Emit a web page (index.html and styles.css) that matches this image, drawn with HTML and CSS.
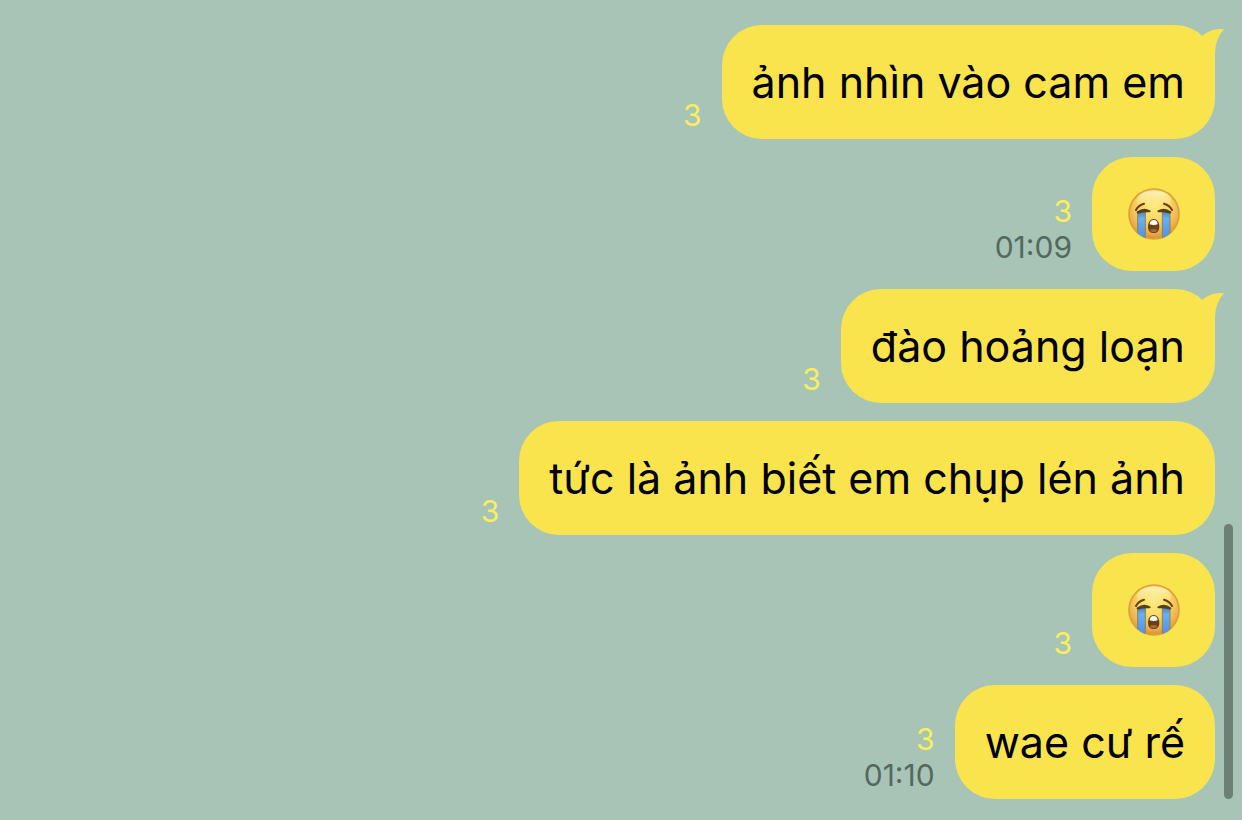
FILE: index.html
```html
<!DOCTYPE html>
<html lang="vi">
<head>
<meta charset="utf-8">
<meta name="viewport" content="width=device-width, initial-scale=1">
<title>Chat</title>
<link rel="stylesheet" href="styles.css">
</head>
<body>
<svg class="defs" aria-hidden="true">
  <defs>
    <radialGradient id="face" cx="0.5" cy="0.34" r="0.68">
      <stop offset="0" stop-color="#fdea7c"/>
      <stop offset="0.45" stop-color="#f9d863"/>
      <stop offset="0.78" stop-color="#eeb04a"/>
      <stop offset="1" stop-color="#d68a30"/>
    </radialGradient>
    <linearGradient id="shine" x1="0" y1="0" x2="0" y2="1">
      <stop offset="0" stop-color="#fffbe0" stop-opacity="0.7"/>
      <stop offset="1" stop-color="#fff3a0" stop-opacity="0"/>
    </linearGradient>
    <linearGradient id="tear" x1="0" y1="0" x2="0" y2="1">
      <stop offset="0" stop-color="#4682c4"/>
      <stop offset="0.25" stop-color="#68b0f6"/>
      <stop offset="1" stop-color="#4a8fe6"/>
    </linearGradient>
    <clipPath id="disc"><circle cx="130" cy="132" r="76"/></clipPath>
    <symbol id="crying" viewBox="52 54 156 156">
      <circle cx="130" cy="132" r="75" fill="url(#face)" stroke="#dfa03c" stroke-width="5"/>
      <ellipse cx="130" cy="90" rx="52" ry="28" fill="url(#shine)"/>
      <g clip-path="url(#disc)">
        <rect x="81" y="124" width="23" height="86" fill="url(#tear)"/>
        <rect x="155" y="124" width="23" height="86" fill="url(#tear)"/>
        <path d="M81 124v84M104 124v84M155 124v84M178 124v84" fill="none" stroke="#8f8350" stroke-width="3"/>
      </g>
      <path d="M76 120Q83 106 100 101M184 120Q177 106 160 101" fill="none" stroke="#694014" stroke-width="6" stroke-linecap="round"/>
      <path d="M81 127Q99 113 117 124Q99 123 83 128ZM179 127Q161 113 143 124Q161 123 177 128Z" fill="#54401b" stroke="#54401b" stroke-width="6" stroke-linejoin="round"/>
      <path d="M129 147C119 147 112 157 112 170C112 183 119 189 129 189C139 189 146 183 146 170C146 157 139 147 129 147Z" fill="#69401a"/>
      <path d="M117 163Q118 150 129 150Q140 150 141 163Q129 168 117 163Z" fill="#fffdf4"/>
      <path d="M117 181Q129 173 141 181Q137 187 129 187Q121 187 117 181Z" fill="#a66b34"/>
    </symbol>
    <symbol id="tail" viewBox="140 57 81 108">
      <path d="M140 88L158 76Q184 55 221 57Q194 89 194 132V165H140Z" fill="#f9e44d"/>
    </symbol>
  </defs>
</svg>
<main class="chat">
  <div class="message">
    <div class="meta"><span class="unread">3</span></div>
    <div class="bubble">ảnh nhìn vào cam em<svg class="tail" aria-hidden="true"><use href="#tail"/></svg></div>
  </div>
  <div class="message">
    <div class="meta"><span class="unread">3</span><time class="time">01:09</time></div>
    <div class="bubble"><svg class="emoji" role="img" aria-label="Loudly crying face"><use href="#crying"/></svg></div>
  </div>
  <div class="message">
    <div class="meta"><span class="unread">3</span></div>
    <div class="bubble">đào hoảng loạn<svg class="tail" aria-hidden="true"><use href="#tail"/></svg></div>
  </div>
  <div class="message">
    <div class="meta"><span class="unread">3</span></div>
    <div class="bubble">tức là ảnh biết em chụp lén ảnh</div>
  </div>
  <div class="message">
    <div class="meta"><span class="unread">3</span></div>
    <div class="bubble"><svg class="emoji" role="img" aria-label="Loudly crying face"><use href="#crying"/></svg></div>
  </div>
  <div class="message">
    <div class="meta"><span class="unread">3</span><time class="time">01:10</time></div>
    <div class="bubble">wae cư rế</div>
  </div>
</main>
<div class="scroll-thumb" aria-hidden="true"></div>
</body>
</html>
```
FILE: styles.css
```css
* {
  box-sizing: border-box;
}

body {
  margin: 0;
  background: #a7c4b7;
  font-family: Inter, "Noto Sans", sans-serif;
}

.defs {
  position: absolute;
  width: 0;
  height: 0;
}

.chat {
  display: flex;
  flex-direction: column;
  gap: 18px;
  padding: 25px 27px 21px;
}

.message {
  display: flex;
  justify-content: flex-end;
  align-items: flex-end;
  gap: 20px;
}

.meta {
  display: flex;
  flex-direction: column;
  align-items: flex-end;
  padding-bottom: 6px;
  font-size: 30px;
  line-height: 36px;
}

.unread {
  color: #f9ee5d;
}

.time {
  color: #53695f;
}

.bubble {
  position: relative;
  display: flex;
  justify-content: center;
  align-items: center;
  min-width: 123px;
  min-height: 114px;
  padding: 30px;
  border-radius: 40px;
  background: #f9e44d;
  color: #000;
  font-size: 43px;
  line-height: 54px;
}

.tail {
  position: absolute;
  top: 4px;
  right: -9px;
  width: 27px;
  height: 36px;
}

.emoji {
  width: 52px;
  height: 52px;
}

.scroll-thumb {
  position: fixed;
  right: 9px;
  bottom: 21px;
  width: 9px;
  height: 275px;
  border-radius: 5px;
  background: #6c8076;
}
```
